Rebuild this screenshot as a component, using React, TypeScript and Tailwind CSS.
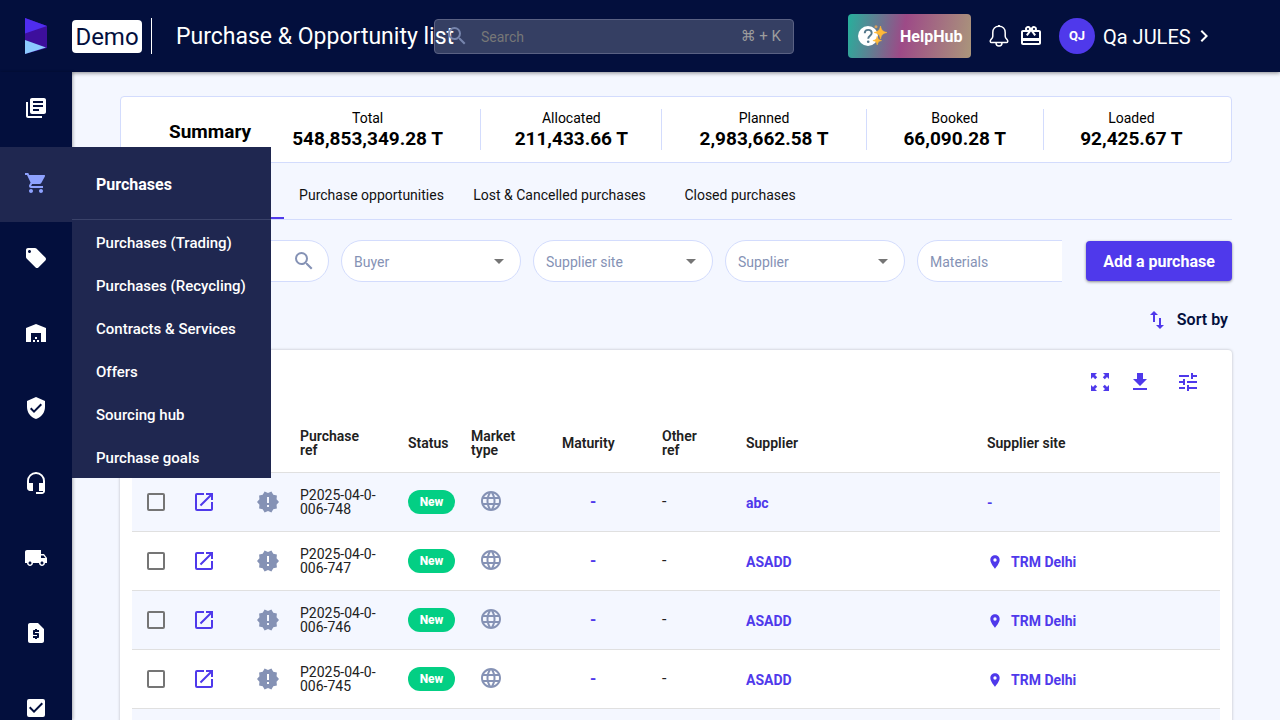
import type { ReactNode } from "react";
import {
  MdArrowDropDown,
  MdCardGiftcard,
  MdCheckBox,
  MdChevronRight,
  MdHeadsetMic,
  MdImportExport,
  MdLanguage,
  MdLibraryBooks,
  MdLocalOffer,
  MdLocalShipping,
  MdLocationOn,
  MdNewReleases,
  MdOpenInNew,
  MdRequestPage,
  MdSearch,
  MdShoppingCart,
  MdTune,
  MdVerifiedUser,
  MdWarehouse,
} from "react-icons/md";

const totals = [
  { label: "Total", value: "548,853,349.28 T" },
  { label: "Allocated", value: "211,433.66 T" },
  { label: "Planned", value: "2,983,662.58 T" },
  { label: "Booked", value: "66,090.28 T" },
  { label: "Loaded", value: "92,425.67 T" },
];

const menuItems = [
  "Purchases (Trading)",
  "Purchases (Recycling)",
  "Contracts & Services",
  "Offers",
  "Sourcing hub",
  "Purchase goals",
];

const rows = [
  { ref: ["P2025-04-0-", "006-748"], supplier: "abc", site: "" },
  { ref: ["P2025-04-0-", "006-747"], supplier: "ASADD", site: "TRM Delhi" },
  { ref: ["P2025-04-0-", "006-746"], supplier: "ASADD", site: "TRM Delhi" },
  { ref: ["P2025-04-0-", "006-745"], supplier: "ASADD", site: "TRM Delhi" },
];

function Logo() {
  return (
    <svg width="22" height="36" viewBox="0 0 22 36" aria-hidden="true">
      <path d="M0 0 22 8v22L0 36Z" fill="#3d0f9c" />
      <path d="M0 0 22 8 0 15.500Z" fill="#4f2df0" />
      <path d="M0 22 21 29.500 0 36Z" fill="#8ccbff" />
    </svg>
  );
}

function BellIcon() {
  return (
    <svg width="24" height="24" viewBox="0 0 24 24" fill="none" stroke="currentColor" strokeWidth="1.500" strokeLinejoin="round" aria-hidden="true">
      <path d="M12 2.200c-3.900 0-6.200 2.700-6.200 6.300v3.700c0 1.500-.9 2.300-2 3.600-.9 1.100-.8 2.700.8 2.700h14.800c1.600 0 1.700-1.600.8-2.700-1.100-1.300-2-2.100-2-3.600V8.500c0-3.600-2.300-6.300-6.200-6.300Z" />
      <path d="M9 18.700c0 2 1.200 3.300 3 3.300s3-1.300 3-3.300" />
      <path d="M11 1.700h2" />
    </svg>
  );
}

function HelpIcon() {
  return (
    <svg width="30" height="24" viewBox="0 0 30 24" aria-hidden="true">
      <circle cx="10" cy="12" r="10" fill="#fff" />
      <path d="M6.700 9.300c.1-2.100 1.500-3.400 3.500-3.400s3.500 1.300 3.500 3.100c0 2.800-3.500 2.700-3.500 5.700" fill="none" stroke="#55798c" strokeWidth="1.900" />
      <circle cx="10.200" cy="17.700" r="1.300" fill="#55798c" />
      <path d="M22.500 2c1 4.200 2.200 5.500 6.400 6.500-4.200 1-5.400 2.300-6.400 6.500-1-4.200-2.200-5.500-6.400-6.500 4.200-1 5.400-2.300 6.400-6.500Z" fill="#ffb938" stroke="#ffb938" strokeWidth=".6" />
      <path d="M19.200 12.300c.7 2.900 1.500 3.700 4.300 4.300-2.800.6-3.600 1.400-4.300 4.300-.7-2.900-1.500-3.700-4.300-4.300 2.800-.6 3.600-1.400 4.300-4.300Z" fill="#ffb938" stroke="#ffb938" strokeWidth=".6" />
      <circle cx="18" cy="2.800" r="1.500" fill="#d9a05b" />
    </svg>
  );
}

function ExpandIcon() {
  return (
    <svg width="24" height="24" viewBox="0 0 24 24" fill="currentColor" aria-hidden="true">
      <path d="M3 3h6L7 5l2.200 2.200-2 2L5 7 3 9ZM21 3h-6l2 2-2.200 2.200 2 2L19 7l2 2ZM3 21h6l-2-2 2.200-2.200-2-2L5 17l-2-2ZM21 21h-6l2-2-2.200-2.200 2-2L19 17l2-2Z" />
    </svg>
  );
}

function DownloadIcon() {
  return (
    <svg width="24" height="24" viewBox="0 0 24 24" fill="currentColor" aria-hidden="true">
      <path d="M9 3h6v6h4l-7 7-7-7h4ZM5 18h14v2H5Z" />
    </svg>
  );
}

function NavItem({ label, children }: { label: string; children: ReactNode }) {
  return (
    <li className="h-[75px]">
      <a href="#" aria-label={label} className="flex h-full justify-center pt-6 text-2xl text-white">
        {children}
      </a>
    </li>
  );
}

function Sidebar() {
  return (
    <nav aria-label="Main" className="relative z-20 w-[72px] shrink-0 bg-[#030f3d] shadow-[1px_0_3px_rgba(0,0,0,0.3)]">
      <ul>
        <NavItem label="Library"><MdLibraryBooks /></NavItem>
        <li className="relative h-[75px] bg-[#1f2750]">
          <a href="#" aria-label="Purchases" className="flex h-full justify-center pt-6 text-2xl text-[#8ea2ff]">
            <MdShoppingCart />
          </a>
          <div className="absolute left-full top-0 w-[199px] bg-[#1f2750] text-white">
            <h2 className="h-[73px] border-b border-[#3a4269] pl-6 text-base font-bold leading-[76px]">Purchases</h2>
            <ul className="font-medium">
              {menuItems.map((item) => (
                <li key={item} className="h-[43px] whitespace-nowrap pl-6 text-[15px] leading-[46px]">
                  <a href="#">{item}</a>
                </li>
              ))}
            </ul>
          </div>
        </li>
        <NavItem label="Sales"><MdLocalOffer /></NavItem>
        <NavItem label="Warehouse"><MdWarehouse /></NavItem>
        <NavItem label="Compliance"><MdVerifiedUser /></NavItem>
        <NavItem label="Support"><MdHeadsetMic /></NavItem>
        <NavItem label="Logistics"><MdLocalShipping /></NavItem>
        <NavItem label="Invoices"><MdRequestPage /></NavItem>
        <NavItem label="Tasks"><MdCheckBox /></NavItem>
      </ul>
    </nav>
  );
}

function Header() {
  return (
    <header className="relative z-10 flex h-[72px] shrink-0 items-center bg-[#030f3d] text-white shadow-[0_1px_4px_rgba(0,0,0,0.45)]">
      <a href="#" aria-label="Home" className="flex w-[72px] shrink-0 justify-center">
        <Logo />
      </a>
      <div className="flex min-w-0 flex-1 items-center whitespace-nowrap">
        <span className="h-[33px] w-[70px] shrink-0 rounded bg-white text-center text-2xl leading-[35px] text-[#030f3d]">Demo</span>
        <h1 className="ml-[9px] h-9 border-l border-white pl-6 text-[23px] leading-[38px]">Purchase &amp; Opportunity list</h1>
      </div>
      <label className="relative flex h-[35px] w-[360px] shrink-0 items-center rounded border border-[#5a6183] bg-white/20 pl-[10px] pr-3">
        <MdSearch className="shrink-0 text-2xl text-[#7684ac]" />
        <input type="text" aria-label="Search" placeholder="Search" className="ml-3 min-w-0 flex-1 bg-transparent pt-px text-sm outline-none placeholder:text-[#777777]" />
        <kbd className="font-[Roboto,'DejaVu_Sans',sans-serif] text-[15px] text-[#9c9c9c]">⌘ + K</kbd>
      </label>
      <div className="ml-[54px] flex w-[432px] shrink-0 items-center">
        <button type="button" className="flex h-11 w-[123px] items-center rounded bg-[linear-gradient(100deg,#26b09c_0%,#9d4a87_45%,#aa967b_100%)] pl-[10px] text-base font-bold">
          <HelpIcon />
          <span className="ml-3 pt-px">HelpHub</span>
        </button>
        <button type="button" aria-label="Notifications" className="ml-4"><BellIcon /></button>
        <button type="button" aria-label="Gifts" className="ml-2 text-2xl"><MdCardGiftcard /></button>
        <button type="button" className="ml-4 flex items-center">
          <span className="flex size-9 items-center justify-center rounded-full bg-[#4f39eb] text-[13px] font-bold">QJ</span>
          <span className="ml-2 w-[89px] whitespace-nowrap pt-px text-left text-xl">Qa JULES</span>
          <MdChevronRight className="text-2xl" />
        </button>
      </div>
    </header>
  );
}

function Summary() {
  return (
    <section aria-label="Summary" className="grid h-[67px] grid-cols-[133px_226fr_181fr_204fr_177fr_176fr] items-center rounded border border-[#d3dcfd] bg-white pr-3 text-black">
      <h2 className="whitespace-nowrap pl-12 pt-1 text-[19px] font-bold leading-6">Summary</h2>
      {totals.map((total) => (
        <div key={total.label} className="h-[41px] whitespace-nowrap border-l border-[#d3dcfd] text-center nth-2:border-transparent">
          <p className="text-sm leading-[18px]">{total.label}</p>
          <p className="text-[19px] font-bold leading-6">{total.value}</p>
        </div>
      ))}
    </section>
  );
}

function Tabs() {
  return (
    <div role="tablist" className="flex h-[57px] whitespace-nowrap border-b border-[#d3dcfd] text-sm text-[#111111]">
      <button type="button" role="tab" aria-selected="true" className="w-[164px] border-b-2 border-[#4f39eb] pt-2">Purchases</button>
      <button type="button" role="tab" aria-selected="false" className="w-[175px] pt-2">Purchase opportunities</button>
      <button type="button" role="tab" aria-selected="false" className="w-[201px] pt-2">Lost &amp; Cancelled purchases</button>
      <button type="button" role="tab" aria-selected="false" className="w-[160px] pt-2">Closed purchases</button>
    </div>
  );
}

function FilterSelect({ label }: { label: string }) {
  return (
    <div className="relative h-[42px] w-[180px] shrink-0">
      <select aria-label={label} className="size-full appearance-none rounded-full border border-[#d3dcfd] bg-white pl-3 pt-px text-sm text-[#8592b5]">
        <option>{label}</option>
      </select>
      <MdArrowDropDown className="pointer-events-none absolute right-[10px] top-[9px] text-2xl text-[#757575]" />
    </div>
  );
}

function Filters() {
  return (
    <div className="mt-5 flex items-center gap-6">
      <div className="flex min-w-0 flex-1 gap-3 overflow-hidden">
        <label className="flex h-[42px] w-[209px] shrink-0 items-center rounded-full border border-[#d3dcfd] bg-white px-3">
          <input type="text" aria-label="Search purchases" className="min-w-0 flex-1 outline-none" />
          <MdSearch className="text-2xl text-[#8592b5]" />
        </label>
        <FilterSelect label="Buyer" />
        <FilterSelect label="Supplier site" />
        <FilterSelect label="Supplier" />
        <FilterSelect label="Materials" />
      </div>
      <button type="button" className="h-10 w-[146px] shrink-0 rounded bg-[#4f39eb] pt-px text-base font-bold text-white shadow-[0_1px_3px_rgba(0,0,0,0.45)]">
        Add a purchase
      </button>
    </div>
  );
}

function PurchaseTable() {
  return (
    <table className="w-full table-fixed text-sm leading-[14px]">
      <colgroup>
        <col className="w-12" />
        <col className="w-12" />
        <col className="w-[72px]" />
        <col className="w-[108px]" />
        <col className="w-[63px]" />
        <col className="w-[91px]" />
        <col className="w-[100px]" />
        <col className="w-[84px]" />
        <col className="w-[241px]" />
        <col />
      </colgroup>
      <thead>
        <tr className="h-[58px] border-b border-[#e0e0e0] text-left text-[#212121]">
          <td />
          <td />
          <td />
          <th scope="col" className="font-semibold">Purchase<br />ref</th>
          <th scope="col" className="font-semibold">Status</th>
          <th scope="col" className="font-semibold">Market<br />type</th>
          <th scope="col" className="font-semibold">Maturity</th>
          <th scope="col" className="font-semibold">Other<br />ref</th>
          <th scope="col" className="font-semibold">Supplier</th>
          <th scope="col" className="font-semibold">Supplier site</th>
        </tr>
      </thead>
      <tbody>
        {rows.map((row) => (
          <tr key={row.ref[1]} className="h-[59px] border-b border-[#e0e0e0] odd:bg-[#f4f7ff]">
            <td>
              <input type="checkbox" aria-label={`Select ${row.ref.join("")}`} className="mx-auto block size-[18px] appearance-none rounded-xs border-2 border-[#757575]" />
            </td>
            <td>
              <a href="#" aria-label={`Open ${row.ref.join("")}`} className="flex justify-center text-2xl text-[#4f39eb]"><MdOpenInNew /></a>
            </td>
            <td className="pl-7"><MdNewReleases className="text-2xl text-[#8592b5]" /></td>
            <td className="text-[#212121]">{row.ref[0]}<br />{row.ref[1]}</td>
            <td>
              <span className="block h-6 w-[47px] rounded-full bg-[#03cf84] text-center text-xs font-extrabold leading-6 text-white">New</span>
            </td>
            <td className="pb-[2px] pl-2"><MdLanguage className="text-2xl text-[#8592b5]" /></td>
            <td className="pl-7 text-base font-bold text-[#4f39eb]">-</td>
            <td className="text-base text-[#212121]">-</td>
            <td className="pt-[2px] font-bold text-[#4f39eb]"><a href="#">{row.supplier}</a></td>
            <td className="pt-[2px] font-bold text-[#4f39eb]">
              {row.site ? (
                <a href="#" className="flex items-center"><MdLocationOn className="mr-2 text-base" />{row.site}</a>
              ) : (
                "-"
              )}
            </td>
          </tr>
        ))}
        <tr className="h-[59px] bg-[#f4f7ff]">
          <td colSpan={10} />
        </tr>
      </tbody>
    </table>
  );
}

export default function App() {
  return (
    <div className="flex h-screen flex-col overflow-hidden bg-[#f4f7ff] font-[Roboto,'Liberation_Sans',sans-serif]">
      <Header />
      <div className="flex min-h-0 flex-1">
        <Sidebar />
        <main className="min-w-0 flex-1 overflow-hidden px-12 pt-6">
          <Summary />
          <Tabs />
          <Filters />
          <div className="mt-6 flex justify-end">
            <button type="button" className="flex h-7 items-center gap-2 pr-1 text-base font-semibold text-[#030f3d]">
              <MdImportExport className="text-2xl text-[#4f39eb]" />
              Sort by
            </button>
          </div>
          <section aria-label="Purchase list" className="mt-4 rounded bg-white px-3 shadow-[0_0_3px_rgba(0,0,0,0.25)]">
            <div className="flex h-16 items-center justify-end pr-5 text-2xl text-[#4f39eb]">
              <button type="button" aria-label="Expand"><ExpandIcon /></button>
              <button type="button" aria-label="Download" className="ml-4"><DownloadIcon /></button>
              <button type="button" aria-label="Columns" className="ml-6"><MdTune /></button>
            </div>
            <PurchaseTable />
          </section>
        </main>
      </div>
    </div>
  );
}
